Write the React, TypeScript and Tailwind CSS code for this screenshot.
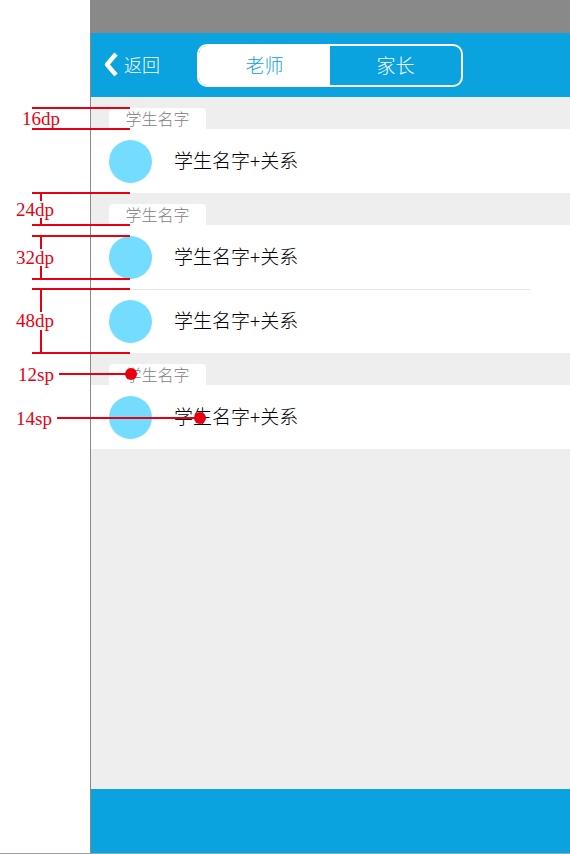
import { useState } from "react";

const groups = [
  { title: "学生名字", rows: ["学生名字+关系"] },
  { title: "学生名字", rows: ["学生名字+关系", "学生名字+关系"] },
  { title: "学生名字", rows: ["学生名字+关系"] },
];

const tabs = ["老师", "家长"];

function StatusBar() {
  return <div className="h-[33px] bg-[#898989]" />;
}

function Header() {
  const [active, setActive] = useState("老师");
  return (
    <header className="flex h-16 items-center bg-[#0aa2df] pl-[11px]">
      <button type="button" className="flex w-[95px] items-center gap-1 pb-0.5 text-lg font-light text-white">
        <svg width="18" height="26" viewBox="0 0 18 26" fill="none" aria-hidden="true">
          <path d="M14 3 L5 13.5 L14 24" stroke="#fff" strokeWidth="4.4" strokeLinejoin="round" />
        </svg>
        返回
      </button>
      <div className="flex h-[43px] w-[266px] overflow-hidden rounded-[10px] border-2 border-white">
        {tabs.map((tab) => (
          <button
            key={tab}
            type="button"
            aria-pressed={tab === active}
            onClick={() => setActive(tab)}
            className={
              tab === active
                ? "flex-1 bg-white text-[19px] font-light text-[#0aa2df]"
                : "flex-1 text-[19px] font-light text-white"
            }
          >
            {tab}
          </button>
        ))}
      </div>
    </header>
  );
}

function Group({ title, rows }: { title: string; rows: string[] }) {
  return (
    <section>
      <div className="flex h-8 items-end pl-[18px]">
        <h2 className="h-[21px] w-[97px] rounded-t bg-white text-center text-base leading-5 font-light text-[#808080]">
          {title}
        </h2>
      </div>
      <ul className="bg-white">
        {rows.map((row, i) => (
          <li key={i} className="flex h-16 flex-col">
            {i > 0 && <div className="mr-10 h-px bg-[#e6e6e6]" />}
            <div className="flex flex-1 items-center gap-[22px] pl-[18px]">
              <span className="size-[43px] rounded-full bg-[#73dcff]" />
              <span className="pb-0.5 text-[19px] font-light text-black">{row}</span>
            </div>
          </li>
        ))}
      </ul>
    </section>
  );
}

function Annotations() {
  return (
    <svg
      className="pointer-events-none absolute top-0 left-0 fill-[#e60012] font-['Liberation_Serif',serif] text-[19px]"
      width="220"
      height="460"
      viewBox="0 0 220 460"
    >
      <g stroke="#e60012" strokeWidth="2">
        <path d="M32 108H130M32 129H130" />
        <path d="M32 193H130M32 225H130M41 193V201M41 218V225" />
        <path d="M32 236H130M32 279H130M41 236V249M41 266V279" />
        <path d="M32 289H130M32 353H130M41 289V312M41 330V353" />
        <path d="M59 374H130M57 418H200" />
      </g>
      <circle cx="131" cy="374" r="6" />
      <circle cx="200" cy="418" r="6" />
      <text x="22" y="125">16dp</text>
      <text x="16" y="216">24dp</text>
      <text x="16" y="264">32dp</text>
      <text x="16" y="327">48dp</text>
      <text x="18" y="381">12sp</text>
      <text x="16" y="425">14sp</text>
    </svg>
  );
}

export default function App() {
  return (
    <div className="relative flex min-h-screen border-b border-[#a0a0a0] bg-white font-['Noto_Sans_CJK_SC',sans-serif]">
      <div className="w-[90px] shrink-0" />
      <div className="flex flex-1 flex-col border-l border-[#898989] bg-[#eeeeee]">
        <StatusBar />
        <Header />
        <main className="flex-1">
          {groups.map((group, i) => (
            <Group key={i} title={group.title} rows={group.rows} />
          ))}
        </main>
        <footer className="h-16 bg-[#0aa2df]" />
      </div>
      <Annotations />
    </div>
  );
}
